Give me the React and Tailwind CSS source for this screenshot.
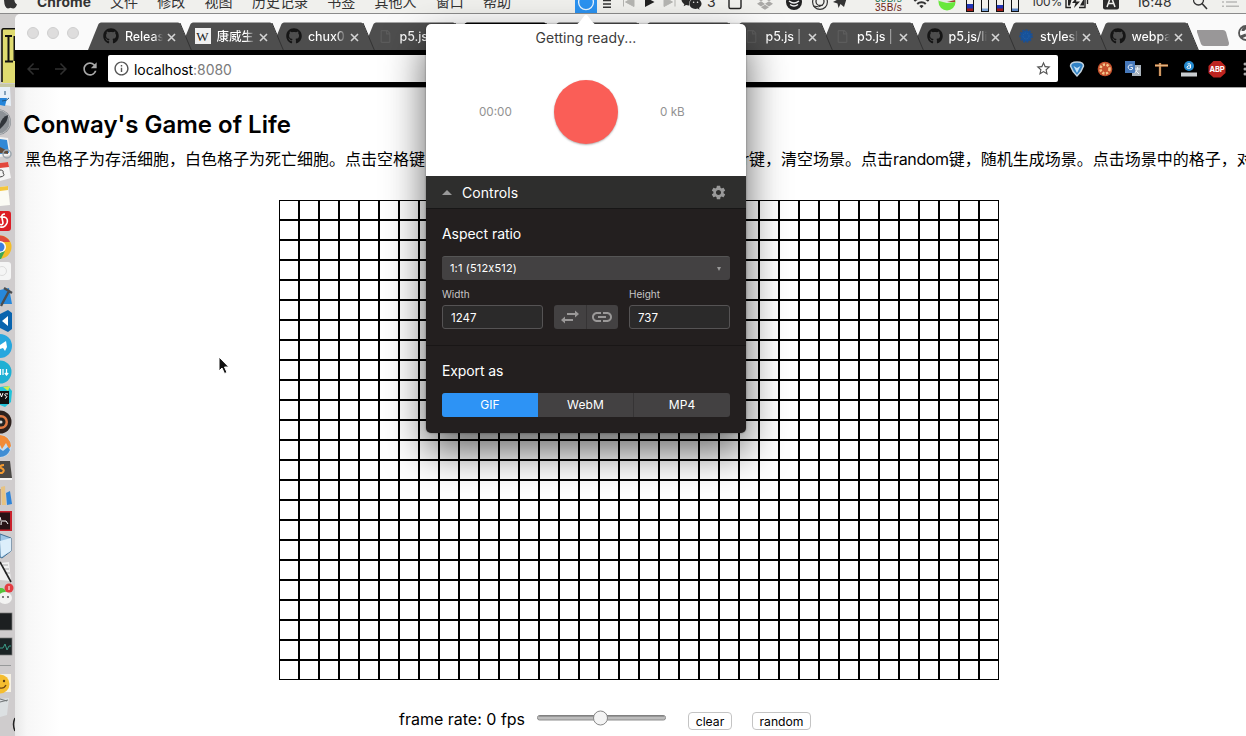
import React from "react";
import { FaGithub, FaWeixin, FaDropbox, FaRegFile } from "react-icons/fa";
import { MdSettings, MdLink, MdWifi, MdRefresh, MdStarBorder, MdArrowBack, MdArrowForward, MdInfoOutline } from "react-icons/md";

const menus = ["文件", "修改", "视图", "历史记录", "书签", "其他人", "窗口", "帮助"];

const tabs = [
  { icon: "github", title: "Releases" },
  { icon: "w", title: "康威生命" },
  { icon: "github", title: "chux052" },
  { icon: "file", title: "p5.js | h" },
  { icon: "none", title: "", active: true },
  { icon: "none", title: "" },
  { icon: "none", title: "" },
  { icon: "file", title: "p5.js | r" },
  { icon: "file", title: "p5.js | r" },
  { icon: "github", title: "p5.js/lib" },
  { icon: "atom", title: "styleshe" },
  { icon: "github", title: "webpack" },
];

function TabIcon({ kind }) {
  if (kind === "github") return <FaGithub size={16} color="#151515" />;
  if (kind === "w")
    return (
      <span className="flex size-4 items-center justify-center bg-[#f0f0f0] font-['Liberation_Serif',serif] text-[13px] leading-none text-[#222]">W</span>
    );
  if (kind === "file") return <FaRegFile size={13} color="#5c5c5c" className="ml-px" />;
  if (kind === "atom")
    return (
      <svg width="16" height="16" viewBox="0 0 16 16">
        <circle cx="8" cy="8" r="5.500" fill="#17529a" />
        <circle cx="8" cy="8" r="6" fill="none" stroke="#1c4f92" strokeWidth="1.600" strokeDasharray="2 1.400" />
        <circle cx="8" cy="8" r="3" fill="none" stroke="#2260a8" strokeDasharray="1.500 1" />
      </svg>
    );
  return <span className="size-4" />;
}

function Tab({ tab, z }) {
  return (
    <div className="relative flex h-[28px] w-[91.5px] shrink-0 items-center pl-[15px]" style={{ zIndex: z }}>
      <svg className="absolute left-0 top-0" width="104" height="28" viewBox="0 0 104 28">
        <path d="M0 28 L10.500 2 Q11.500 0.500 13 0.500 H90 Q91.500 0.500 92.200 2 L103 28Z" fill={tab.active ? "#000" : "#4e4e4e"} />
        <path d="M92 1 L103.300 28" stroke="#333" strokeWidth="1" fill="none" />
      </svg>
      <span className="relative flex w-[16px] shrink-0 items-center">
        <TabIcon kind={tab.icon} />
      </span>
      <span className="relative ml-[6px] mt-[2px] w-[38px] shrink-0 overflow-hidden whitespace-nowrap bg-gradient-to-r from-white from-75% to-transparent bg-clip-text text-[12.5px] font-medium tracking-[-0.1px] text-transparent">
        {tab.title}
      </span>
      {tab.title && (
        <svg className="relative ml-[4px] mt-[2px] shrink-0" width="9" height="9" viewBox="0 0 9 9">
          <path d="M1 1 L8 8 M8 1 L1 8" stroke="#d4d4d4" strokeWidth="1.600" />
        </svg>
      )}
    </div>
  );
}

function Meter({ a, b, h }) {
  return (
    <svg width="8" height="13" viewBox="0 0 8 13">
      <rect x="0.500" y="-2" width="7" height="13.500" fill="#f4f2ec" stroke="#111" />
      <rect x="1" y={11 - h} width="6" height={h} fill={a} />
      <rect x="1" y="8.500" width="6" height="2.500" fill={b} />
    </svg>
  );
}

function MenuBar() {
  return (
    <header className="flex h-[14px] shrink-0 items-start overflow-hidden border-b border-[#8b8b8b] bg-[#f0f0ed] text-[14px] leading-[20px] text-[#333]">
      <svg className="shrink-0" width="37" height="13" viewBox="0 0 37 13">
        <path d="M4 -4 H16 Q14 -2 14.500 1 Q15 3.500 17 4.500 Q15.500 8.500 13.300 8.500 Q12 8.500 10.500 7.800 Q9 8.500 7.800 8.500 Q4.500 8 4 0Z" fill="#333" />
      </svg>
      <span className="-mt-[8px] w-[73px] shrink-0 text-[13.8px] font-bold tracking-[0.1px]">Chrome</span>
      <nav className="-mt-[8px] flex w-[465px] shrink-0 gap-[19.3px]">
        {menus.map((m) => (
          <span key={m}>{m}</span>
        ))}
      </nav>
      <div className="flex h-[13px] w-[22px] shrink-0 justify-center bg-[#2b92f0]">
        <svg width="22" height="13" viewBox="0 0 22 13"><circle cx="11" cy="2.200" r="7.400" fill="none" stroke="#e8f4ff" strokeWidth="1.300" /></svg>
      </div>
      <svg className="shrink-0" width="79" height="13" viewBox="597 0 79 13">
        <path d="M603 0.500h8M603 4h8M603 7.300h8" stroke="#333" strokeWidth="1.500" />
        <path d="M623.500 -3v9.500M634 -3v9.500l-8.500-4.500z" stroke="#b5b5b2" fill="#b5b5b2" />
        <path d="M645 -3l9.500 5-9.500 5z" fill="#222" />
        <path d="M675 -3v9.500M664 -3v9.500l8.500-4.500z" stroke="#b5b5b2" fill="#b5b5b2" />
      </svg>
      <FaWeixin className="-mt-[9px] ml-[5px] shrink-0" size={21} color="#2a2a2a" />
      <span className="-mt-[8px] ml-[5px] w-[21px] shrink-0 text-[14px]">3</span>
      <svg className="shrink-0" width="29" height="13" viewBox="728 0 29 13"><rect x="729" y="-4" width="12" height="12.500" rx="1.500" fill="none" stroke="#222" strokeWidth="1.400" /></svg>
      <FaDropbox className="-mt-[5px] shrink-0" size={16} color="#aaa9a7" />
      <svg className="shrink-0" width="102" height="13" viewBox="773 0 102 13">
        <circle cx="794" cy="2" r="8" fill="#222" />
        <path d="M789 1q5 4 10 0M790 4.500q4 3 8 0" stroke="#eee" strokeWidth="1.400" fill="none" />
        <circle cx="820" cy="2" r="7.400" fill="none" stroke="#333" strokeWidth="1.200" />
        <circle cx="820" cy="1.500" r="4" fill="none" stroke="#333" strokeWidth="1.300" />
        <path d="M813 6q6 2 10-1" stroke="#333" fill="none" />
        <path d="M833 2L848 -6L844 7L840.500 4L838.500 8L837.500 3.500Z" fill="#333" />
      </svg>
      <div className="-mt-[6px] w-[38px] shrink-0 font-['Liberation_Sans',sans-serif] text-[10px] leading-[9px] tracking-[0.3px]">
        <div className="text-[#1b7450]">38B/s</div>
        <div className="text-[#6d1f16]">35B/s</div>
      </div>
      <MdWifi className="-mt-[6px] shrink-0" size={17} color="#333" />
      <svg className="ml-[8px] mr-[10px] shrink-0" width="18" height="13" viewBox="0 0 18 13">
        <circle cx="9" cy="2" r="8.500" fill="#68e83c" />
        <path d="M9 3L1 1V-3H17V2Z" fill="#e5e9e2" />
        <path d="M9 2L17 2V0Z" fill="#a23f35" />
      </svg>
      <div className="flex w-[65px] shrink-0 gap-[7px]">
        <Meter a="#2033b5" b="#a01b16" h={7} />
        <Meter a="#f4f2ec" b="#7ba4d9" h={4} />
        <Meter a="#2033b5" b="#a01b16" h={6} />
        <Meter a="#f4f2ec" b="#5c86c4" h={4} />
      </div>
      <span className="-mt-[8px] w-[34px] shrink-0 text-[12px] tracking-[-0.2px]">100%</span>
      <svg className="shrink-0" width="71" height="13" viewBox="1065 0 71 13">
        <path d="M1073 -3H1066V7.500H1071M1079 7.500H1085V-3M1087.500 0v4" fill="none" stroke="#222" strokeWidth="1.400" />
        <path d="M1068 -2h4l-2 7.500h-2zM1080 5.500l4-7v7z" fill="#222" />
        <path d="M1077 -3L1072 3h3.500L1074 8L1080 1.500h-4z" fill="#222" />
        <rect x="1103" y="-6" width="16" height="15.500" rx="2" fill="#2b2b2b" />
        <path d="M1107 7L1111 -4L1115 7M1108.500 3.500h5" fill="none" stroke="#f0f0ed" strokeWidth="1.500" />
      </svg>
      <span className="-mt-[8px] w-[57px] shrink-0 text-[14px] tracking-[-0.1px]">16:48</span>
      <svg className="shrink-0" width="53" height="13" viewBox="1193 0 53 13">
        <circle cx="1198.500" cy="0" r="5" fill="none" stroke="#333" strokeWidth="1.300" />
        <path d="M1202 3.500L1207 9" stroke="#333" strokeWidth="1.600" />
        <path d="M1222 2h2M1226 2h11M1222 6.300h2M1226 6.300h13" stroke="#b8b8b6" strokeWidth="1.500" />
      </svg>
    </header>
  );
}

function Dock() {
  return (
    <aside className="w-[15px] shrink-0 overflow-hidden bg-[#cfcccd]">
      <svg width="15" height="722" viewBox="0 14 15 722">
        <rect x="0" y="14" width="15" height="70" fill="#cfcdcc" />
        <rect x="2" y="28" width="13" height="55" fill="#dfdb70" />
        <path d="M15 28.700H3.500Q2 28.700 2 31V82" fill="none" stroke="#111" strokeWidth="1.600" />
        <path d="M5 36h7M8.500 36v25M5 61.500h8M14.500 36v25" stroke="#111" strokeWidth="2" />
        <rect x="0" y="84" width="15" height="3" fill="#c6c8a5" />
        <path d="M0 87H10L11 106L0 104Z" fill="#e7f0f8" /><path d="M0 98h7l-2 8-5-1z" fill="#2585da" /><path d="M5 91v4M2 101q5 0 7-3" stroke="#20557f" fill="none" />
        <circle cx="-2" cy="122" r="13" fill="#8d9297" /><circle cx="-2" cy="122" r="12" fill="none" stroke="#b7babc" /><path d="M0 124Q2 117 8 115Q8 121 3 126L0 129Z" fill="#30353a" />
        <path d="M0 137L8 138L11 155L0 157Z" fill="#f2f2f2" /><path d="M0 139L7 140L9 153L0 154Z" fill="#3289d6" /><path d="M0 147l8 4v3l-8-1z" fill="#624c3b" /><circle cx="7" cy="154" r="4" fill="none" stroke="#9ba6ae" strokeWidth="1.500" />
        <path d="M0 163L8 162L11 178L0 181Z" fill="#f5f5f5" /><path d="M0 163L8 162L9 167L0 168Z" fill="#e2473d" /><path d="M0 170q4 0 3 3q3 3-3 4" fill="none" stroke="#444" />
        <path d="M0 187L8 186L10 205L0 206Z" fill="#fbfbf4" /><path d="M0 187L8 186V190L0 191Z" fill="#f4c63d" />
        <rect x="-10" y="211" width="21" height="20" rx="3" fill="#dc1c25" /><path d="M5 214q-4 0-3 4l1 5q-1 3-3 1M0 217q9-1 7 6q-2 5-7 4" fill="none" stroke="#fff" strokeWidth="1.600" />
        <circle cx="0" cy="247" r="11.500" fill="#f4bd27" /><path d="M0 235.500Q7 236 10 242H0Z" fill="#df4c3c" /><circle cx="0" cy="247" r="6" fill="#fff" /><circle cx="0" cy="247" r="4.500" fill="#3c7fe0" /><path d="M0 253l5-2-4 8H0Z" fill="#3ca854" />
        <rect x="-8" y="262" width="19" height="18" rx="3" fill="#f5f5f5" /><circle cx="2" cy="271" r="4.500" fill="none" stroke="#ddd" />
        <path d="M0 290L9 288L12 304H0Z" fill="#2688db" /><path d="M1 306L9 291M4 288L12 293" stroke="#4a4d50" strokeWidth="2.400" />
        <path d="M0 314L8 310L12 313V329L8 332L0 328Z" fill="#0964ae" /><path d="M8 316L2 321L8 326Z" fill="#fff" />
        <circle cx="0" cy="346" r="12" fill="#27a7de" /><path d="M0 345L6 341L7 347L5 351L3 348L0 349Z" fill="#fff" />
        <circle cx="0" cy="372" r="11.500" fill="#1eb0d4" /><path d="M0.500 369v6M3 369v6M6.500 369v6M4.800 373l1.700 2l1.700-2" stroke="#fff" strokeWidth="1.200" fill="none" />
        <path d="M0 387L8 386L12 391L11 402L5 407L0 405Z" fill="#20c3da" /><path d="M3 387l7-1-2 5z" fill="#cdec4a" /><rect x="-8" y="391" width="17" height="13" fill="#111" /><path d="M0 393l1.500 4L3 393M8 394q-4-1-3 1.500q4 1 0 3" stroke="#fff" fill="none" />
        <circle cx="0" cy="422" r="11.500" fill="#2d211e" /><circle cx="1" cy="422" r="7" fill="#e17a44" /><circle cx="1" cy="422" r="4.500" fill="#222" /><circle cx="1" cy="422" r="1.500" fill="#ddd" />
        <circle cx="0" cy="446" r="11.500" fill="#c5dcf0" /><path d="M0 435Q10 436 11 446L9 449L6 443L2 449L0 445Z" fill="#f28b38" /><path d="M0 449l3 2 5-4 2 3q-3 7-10 7z" fill="#3f8dd4" />
        <path d="M0 461H10L12 478H0Z" fill="#4a4845" /><path d="M0 478H12V480H0Z" fill="#f3f3f3" /><path d="M4 465q-5 0-3 3q5 2 1 5h-3" fill="none" stroke="#f29a32" strokeWidth="2" />
        <path d="M1 487l4-1 1 19H2z" fill="#e7c382" /><path d="M6 493l4-2 2 13-5 1z" fill="#3084d7" /><path d="M0 489v16" stroke="#956840" />
        <rect x="-8" y="511" width="20" height="20" fill="#c9202b" /><rect x="-8" y="512.500" width="18" height="17" fill="#281315" /><path d="M0 517q2 5 1 8M2 521h4l2 3" stroke="#fff" fill="none" />
        <path d="M0 534L11 538V551L2 558L0 557Z" fill="#9dc6e6" stroke="#416f94" /><path d="M0 541L11 538V551L1 557Z" fill="#dceefb" />
        <path d="M0 563L9 562L11 581L0 580Z" fill="#f1f1f1" /><path d="M3 565h5M4 569h5M5 573h5" stroke="#aaa" /><path d="M0 562L11 582" stroke="#222" strokeWidth="1.600" />
        <circle cx="1" cy="593" r="5" fill="#54c43b" /><ellipse cx="5" cy="598" rx="7" ry="6" fill="#f3f3f2" /><circle cx="3" cy="597" r="0.900" fill="#444" /><circle cx="8" cy="597" r="0.900" fill="#444" /><circle cx="9" cy="588" r="4.500" fill="#e33d42" /><path d="M9 586v4" stroke="#fff" />
        <rect x="-8" y="613" width="20" height="17" fill="#1c1f21" stroke="#777" strokeWidth="0.700" />
        <rect x="-8" y="638" width="20" height="17" fill="#1b2324" stroke="#777" strokeWidth="0.700" /><path d="M0 648h3l2-4 2 6 2-4h2" fill="none" stroke="#3a9a86" />
        <path d="M0 665.500h11" stroke="#97999a" />
        <path d="M0 674h11v18H0z" fill="#f5f1e5" /><circle cx="0" cy="684" r="9.500" fill="#f5bd2f" /><circle cx="4" cy="681" r="1.200" fill="#553a16" /><path d="M0 688q4 1 6-3" stroke="#704711" fill="none" strokeWidth="1.300" />
        <path d="M0 699L9 698L7 715L0 717Z" fill="#dce0e2" /><path d="M0 702l8-2M0 699l7 2" stroke="#727678" />
        <path d="M15 718q-3 6 0 13" stroke="#222" strokeWidth="1.500" fill="none" />
      </svg>
    </aside>
  );
}

function Toolbar() {
  return (
    <div className="flex h-[37px] shrink-0 items-center bg-black">
      <div className="flex w-[93px] shrink-0 items-center gap-[10px] pl-[9px]">
        <MdArrowBack size={18} color="#303030" />
        <MdArrowForward size={18} color="#303030" />
        <MdRefresh size={20} color="#a8a8a8" />
      </div>
      <div className="flex h-[27px] w-[950px] shrink-0 items-center rounded-[2px] bg-white pl-[5px] pr-[6px]">
        <MdInfoOutline size={17} color="#555" />
        <span className="ml-[4px] mt-px flex-1 text-[14px] tracking-[-0.08px] text-black">
          localhost<span className="text-[#7b7b7b]">:8080</span>
        </span>
        <MdStarBorder size={17} color="#555" />
      </div>
      <svg className="shrink-0" width="188" height="37" viewBox="1058 50 188 37">
        <path d="M1070.500 66q0-4 6.500-4t6.500 4q-2 6-6.500 10q-4.500-4-6.500-10z" fill="#3182c5" stroke="#c3d3de" strokeWidth="1.500" />
        <path d="M1073.500 66l3.500 7 3.500-7-3.500 2z" fill="#bfe0f8" />
        <circle cx="1105" cy="69" r="7.300" fill="#c6512d" />
        <circle cx="1105" cy="69" r="4.500" fill="none" stroke="#f3c68a" strokeWidth="2.600" strokeDasharray="2.200 1.500" />
        <rect x="1132" y="65" width="9" height="11" fill="#a8b2bc" />
        <rect x="1125" y="61" width="10" height="12" fill="#4779bb" />
        <path d="M1132.500 65q-4-1-4.500 2q1 4 4.500 2v-1.500h-2M1135 69h5M1137.500 67v2q-1 3-3 4M1136 71l3 3" fill="none" stroke="#e8f0f7" />
        <path d="M1155 65.500h13M1160 63v13" stroke="#bd7a44" strokeWidth="2.300" />
        <path d="M1155 65.500h13M1160 63v13" stroke="#e9c38f" strokeWidth="0.800" />
        <circle cx="1189" cy="66" r="5" fill="#258bd0" />
        <path d="M1187.500 64q3-1 3 1v3q-4 1-3.500-1t3.500-1" fill="none" stroke="#fff" />
        <path d="M1181 74.500h16" stroke="#c9cdd0" strokeWidth="4" />
        <path d="M1213.500 61h7l5 5v7l-5 4.500h-7l-5-4.500v-7z" fill="#bd2420" />
        <text x="1209.500" y="72.200" fontSize="7.500" fontWeight="700" fill="#fff" textLength="15">ABP</text>
        <g fill="#aaa"><circle cx="1245" cy="64" r="1.500" /><circle cx="1245" cy="69" r="1.500" /><circle cx="1245" cy="74" r="1.500" /></g>
      </svg>
    </div>
  );
}

function Page() {
  return (
    <main className="flex flex-1 flex-col border-t border-[#a5a5a5] bg-[linear-gradient(to_right,#e9e9e9_0px,#f7f7f7_12px,#fff_45px)]">
      <h1 className="mt-[21px] h-[32px] pl-[8px] text-[24px] font-semibold leading-[32px] text-black">Conway's Game of Life</h1>
      <p className="mt-[5px] flex h-[26px] whitespace-nowrap pl-[10px] text-[16px] leading-[26px] text-black">
        <span className="w-[400px] shrink-0">黑色格子为存活细胞，白色格子为死亡细胞。点击空格键</span>
        <span className="flex w-[324px] shrink-0 justify-end">，点击clear</span>
        <span className="shrink-0">键，清空场景。点击<span className="tracking-[-0.35px]">random</span>键，随机生成场景。点击场景中的格子，对其状态</span>
      </p>
      <div className="ml-[264px] mt-[28px] grid w-[720px] shrink-0 grid-cols-36">
        {Array.from({ length: 864 }, (_, i) => (
          <div key={i} className="h-[20px] border border-black" />
        ))}
      </div>
      <div className="ml-[384px] mt-[27px] flex h-[24px] items-center">
        <span className="w-[138px] shrink-0 whitespace-nowrap text-[16px] text-black">frame rate: 0 fps</span>
        <svg className="-mt-[3px] shrink-0" width="130" height="18" viewBox="0 0 130 18">
          <rect x="0.500" y="6.500" width="128" height="4.500" rx="2" fill="#bdbdbd" stroke="#8d8d8d" />
          <path d="M2 7h125" stroke="#757575" />
          <circle cx="63.500" cy="9" r="7" fill="#f4f4f4" stroke="#868686" />
        </svg>
        <button className="ml-[21px] mt-[4px] h-[18px] w-[44px] rounded-[4px] border border-[#c4c4c4] bg-white text-[12.2px] leading-[15px] text-black">clear</button>
        <button className="ml-[20px] mt-[4px] h-[18px] w-[59px] rounded-[4px] border border-[#c4c4c4] bg-white text-[12.2px] leading-[15px] text-black">random</button>
      </div>
    </main>
  );
}

function Recorder() {
  return (
    <section className="absolute left-[426px] top-[24px] w-[320px] rounded-[5px] bg-[#231f1f] text-white shadow-[0_0_2px_rgba(0,0,0,0.45),0_18px_40px_rgba(0,0,0,0.62)]">
      <svg className="absolute -top-[10px] left-[149px]" width="22" height="11" viewBox="0 0 22 11"><path d="M0 11Q3 10 5 7.500L9.500 1.500Q11 0 12.500 1.500L17 7.500Q19 10 22 11Z" fill="#fff" /></svg>
      <div className="h-[152px] rounded-t-[5px] bg-white pt-[4px] text-center">
        <div className="text-[14px] leading-[20px] text-[#3c3c3c]">Getting ready...</div>
        <div className="mt-[32px] flex items-center justify-center text-[11.7px] text-[#929292]">
          <span className="mt-[2px] w-[33px] whitespace-nowrap text-left">00:00</span>
          <span className="mx-[42px] size-[64px] shrink-0 rounded-full bg-[#fa5e57] shadow-[0_1px_2px_rgba(0,0,0,0.3)]" />
          <span className="mt-[2px] w-[33px] whitespace-nowrap text-left">0 kB</span>
        </div>
      </div>
      <div className="flex h-[33px] items-center border-b border-[#171616] bg-[#2e2e2d] pl-[16px] pr-[19px]">
        <svg width="10" height="5" viewBox="0 0 10 5"><path d="M5 0L10 5H0Z" fill="#999" /></svg>
        <span className="ml-[10px] mt-px flex-1 text-[14px] tracking-[0.05px]">Controls</span>
        <MdSettings size={17} color="#999" />
      </div>
      <div className="h-[137px] border-b border-[#191616] px-[16px] pt-[15px]">
        <div className="text-[14px] leading-[20px] tracking-[-0.05px]">Aspect ratio</div>
        <div className="mt-[12px] flex h-[24px] items-center justify-between rounded-[3px] border-t border-[#555] bg-[#434142] px-[8px] text-[11px] tracking-[0.15px]">
          <span>1:1 (512x512)</span>
          <svg width="6" height="4" viewBox="0 0 6 4"><path d="M1 0H5L3 4Z" fill="#999" /></svg>
        </div>
        <div className="mt-[6px] flex items-end justify-between">
          <label className="w-[101px] text-[10px] leading-[16px] text-[#c8c6c6]">
            Width
            <span className="mt-[3px] flex h-[24px] items-center rounded-[3px] border border-[#555354] bg-[#2b2a2a] px-[8px] pt-px text-[11.500px] text-white">1247</span>
          </label>
          <div className="flex h-[24px] w-[64px] rounded-[3px] bg-[#434142]">
            <span className="flex flex-1 items-center justify-center border-r border-[#363435]">
              <svg width="18" height="14" viewBox="0 0 18 14"><path d="M6 4H15M3 10H12" stroke="#9a9898" strokeWidth="1.800" /><path d="M14 0.500L18 4L14 7.500ZM4 6.500L0 10L4 13.500Z" fill="#9a9898" /></svg>
            </span>
            <span className="flex flex-1 items-center justify-center"><MdLink size={24} color="#9a9898" /></span>
          </div>
          <label className="w-[101px] text-[10px] leading-[16px] text-[#c8c6c6]">
            Height
            <span className="mt-[3px] flex h-[24px] items-center rounded-[3px] border border-[#555354] bg-[#2b2a2a] px-[8px] pt-px text-[11.500px] text-white">737</span>
          </label>
        </div>
      </div>
      <div className="h-[87px] px-[16px] pt-[15px]">
        <div className="text-[14px] leading-[20px] tracking-[-0.1px]">Export as</div>
        <div className="mt-[12px] grid h-[24px] grid-cols-3 overflow-hidden rounded-[3px] bg-[#434142] text-center text-[12px] leading-[24px] tracking-[0.1px]">
          <span className="bg-[#2d93f5]">GIF</span>
          <span className="border-r border-[#363435]">WebM</span>
          <span>MP4</span>
        </div>
      </div>
    </section>
  );
}

export default function App() {
  return (
    <div className="relative flex h-[736px] w-[1246px] flex-col overflow-hidden bg-[#cfcccd] font-['Inter','Noto_Sans_CJK_SC',sans-serif]">
      <MenuBar />
      <div className="flex min-h-0 flex-1">
        <Dock />
        <div className="flex w-[1231px] shrink-0 flex-col overflow-hidden rounded-tl-[5px] bg-[#fafafa]">
          <div className="relative isolate flex h-[36px] shrink-0 items-end overflow-hidden">
            <div className="flex h-full w-[73px] shrink-0 items-center gap-[8px] pl-[12px] pt-[2px]">
              <span className="size-[12px] shrink-0 rounded-full border border-[#cfcfcf] bg-[#dedddd]" />
              <span className="size-[12px] shrink-0 rounded-full border border-[#cfcfcf] bg-[#dedddd]" />
              <span className="size-[12px] shrink-0 rounded-full border border-[#cfcfcf] bg-[#dedddd]" />
            </div>
            {tabs.map((tab, i) => (
              <Tab key={i} tab={tab} z={20 - i} />
            ))}
            <svg className="shrink-0" width="60" height="36" viewBox="1186 14 60 36">
              <path d="M1197 30H1223Q1225 30 1226 32L1229 43Q1229 46 1227 46H1204Q1202 46 1201 44L1197 32Z" fill="#999798" />
              <circle cx="1246" cy="33" r="7" fill="none" stroke="#555" strokeWidth="1.800" />
              <path d="M1243 31a3 3 0 0 1 3-3M1241 37l5-2" stroke="#555" strokeWidth="3" />
            </svg>
          </div>
          <Toolbar />
          <Page />
        </div>
      </div>
      <Recorder />
      <svg className="absolute left-[218px] top-[356px]" width="12" height="19" viewBox="0 0 12 19">
        <path d="M1 1V15L4 12L6.500 17.500L9 16.500L6.500 11H10.800Z" fill="#111" stroke="#fff" strokeWidth="1" />
      </svg>
    </div>
  );
}
